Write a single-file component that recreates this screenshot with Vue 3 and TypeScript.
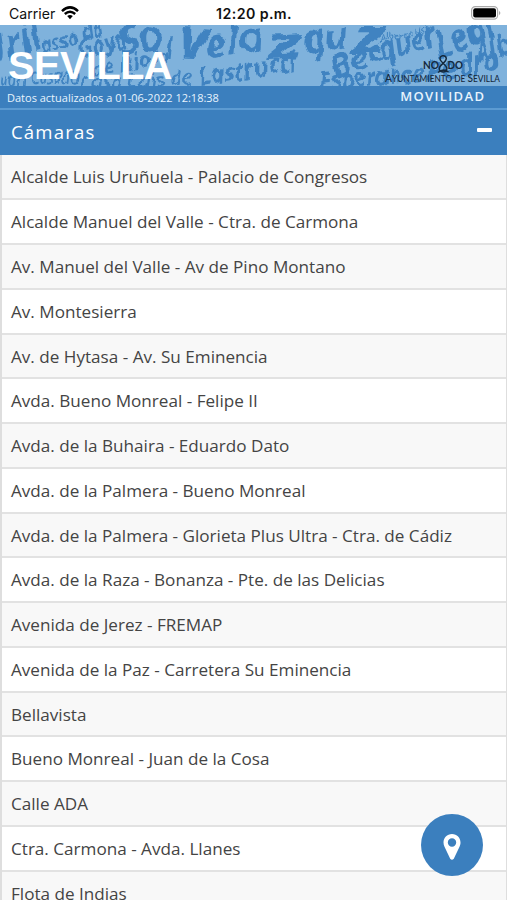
<script setup lang="ts">
interface Word {
  text: string
  x: number
  y: number
  size: number
  angle: number
  weight: number
  length: number
}

const words: Word[] = [
  { text: 'Uril', x: -14, y: 42, size: 42, angle: -18, weight: 700, length: 62 },
  { text: 'asso da', x: 44, y: 29, size: 23, angle: -16, weight: 700, length: 62 },
  { text: 'Goya', x: 80, y: 33, size: 25, angle: -12, weight: 700, length: 50 },
  { text: 'So', x: 122, y: 30, size: 40, angle: -10, weight: 700, length: 42 },
  { text: 'l', x: 167, y: 34, size: 26, angle: -8, weight: 600, length: 9 },
  { text: 'V', x: 178, y: 33, size: 44, angle: 4, weight: 800, length: 29 },
  { text: 'ela', x: 206, y: 34, size: 38, angle: -10, weight: 700, length: 60 },
  { text: 'z', x: 268, y: 35, size: 46, angle: -3, weight: 700, length: 36 },
  { text: 'qu', x: 305, y: 29, size: 38, angle: -8, weight: 700, length: 44 },
  { text: 'z', x: 352, y: 27, size: 46, angle: 0, weight: 700, length: 34 },
  { text: 'de Rioja', x: 92, y: 52, size: 22, angle: -10, weight: 700, length: 80 },
  { text: 'Juan Casado', x: -4, y: 63, size: 20, angle: -4, weight: 600, length: 84 },
  { text: 'Casa Luis de', x: 80, y: 66, size: 21, angle: -3, weight: 600, length: 112 },
  { text: 'Lastrucci', x: 200, y: 61, size: 26, angle: -9, weight: 700, length: 98 },
  { text: 'Alberto Lista', x: 381, y: 17, size: 10, angle: -10, weight: 600, length: 54 },
  { text: 'Bec', x: 336, y: 55, size: 33, angle: -22, weight: 700, length: 54 },
  { text: 'quer', x: 383, y: 37, size: 33, angle: -17, weight: 700, length: 58 },
  { text: 'Leal', x: 440, y: 34, size: 37, angle: -22, weight: 700, length: 62 },
  { text: 'Alb', x: 479, y: 38, size: 30, angle: -16, weight: 700, length: 34 },
  { text: 'Esperance', x: 319, y: 66, size: 26, angle: -5, weight: 700, length: 106 },
  { text: 'Pedro', x: 428, y: 58, size: 31, angle: -10, weight: 700, length: 74 },
]

const cameras: string[] = [
  'Alcalde Luis Uruñuela - Palacio de Congresos',
  'Alcalde Manuel del Valle - Ctra. de Carmona',
  'Av. Manuel del Valle - Av de Pino Montano',
  'Av. Montesierra',
  'Av. de Hytasa - Av. Su Eminencia',
  'Avda. Bueno Monreal - Felipe II',
  'Avda. de la Buhaira - Eduardo Dato',
  'Avda. de la Palmera - Bueno Monreal',
  'Avda. de la Palmera - Glorieta Plus Ultra - Ctra. de Cádiz',
  'Avda. de la Raza - Bonanza - Pte. de las Delicias',
  'Avenida de Jerez - FREMAP',
  'Avenida de la Paz - Carretera Su Eminencia',
  'Bellavista',
  'Bueno Monreal - Juan de la Cosa',
  'Calle ADA',
  'Ctra. Carmona - Avda. Llanes',
  'Flota de Indias',
]
</script>

<template>
  <div class="screen">
    <div class="status">
      <div class="carrier">
        <span>Carrier</span>
        <svg class="wifi" width="18" height="14" viewBox="0 0 18 14">
          <path d="M1 5.1 Q9 -2.3 17 5.1" fill="none" stroke="#000" stroke-width="2.5" />
          <path d="M3.8 8 Q9 3.3 14.2 8" fill="none" stroke="#000" stroke-width="2.4" />
          <path d="M6.2 10.1 Q9 7.8 11.8 10.1 L9 13.3Z" />
        </svg>
      </div>
      <span class="clock">12:20 p.m.</span>
      <svg class="battery" width="30" height="14" viewBox="0 0 30 14">
        <rect x=".6" y=".6" width="26" height="12.6" rx="3.6" fill="#fff" stroke="#aaa" stroke-width="1.2" />
        <rect x="2.2" y="2.2" width="22.8" height="9.4" rx="2" />
        <path d="M28 4.7 Q30.8 7 28 9.2Z" fill="#aaa" />
      </svg>
    </div>

    <header class="banner">
      <svg class="scribble" width="507" height="61" viewBox="0 0 507 61" aria-hidden="true">
        <defs>
          <filter id="brush" x="-5%" y="-20%" width="110%" height="140%">
            <feTurbulence type="fractalNoise" baseFrequency="0.06" numOctaves="2" seed="7" />
            <feDisplacementMap in="SourceGraphic" scale="9" xChannelSelector="R" yChannelSelector="G" />
          </filter>
        </defs>
        <g filter="url(#brush)">
          <text
            v-for="(word, index) in words"
            :key="index"
            :x="word.x"
            :y="word.y"
            :font-size="word.size"
            :font-weight="word.weight"
            :textLength="word.length"
            lengthAdjust="spacingAndGlyphs"
            :transform="`rotate(${word.angle} ${word.x} ${word.y})`"
          >{{ word.text }}</text>
        </g>
      </svg>
      <h1 class="city">SEVILLA</h1>
      <svg class="council" width="118" height="32" viewBox="0 0 118 32">
        <text x="39" y="15" font-size="11.5" font-weight="700" textLength="16" lengthAdjust="spacingAndGlyphs">NO</text>
        <text x="63.5" y="15" font-size="11.5" font-weight="700" textLength="15.5" lengthAdjust="spacingAndGlyphs">DO</text>
        <path d="M62.3 4 C61.5 .5 55.5 1 56 5 C56.5 9 63.5 11 62.8 15 C62 19 55.3 19 55.3 14.5 C55.3 10.5 62.5 9 62.3 4 M54 18.5 Q59 14 64.5 18" />
        <text x="1" y="28" textLength="115" lengthAdjust="spacingAndGlyphs"><tspan font-size="10.5">A</tspan><tspan font-size="8.6">YUNTAMIENTO DE </tspan><tspan font-size="10.5">S</tspan><tspan font-size="8.6">EVILLA</tspan></text>
      </svg>
    </header>

    <div class="info">
      <span class="updated">Datos actualizados a 01-06-2022 12:18:38</span>
      <span class="area">MOVILIDAD</span>
    </div>

    <div class="section">
      <h2>Cámaras</h2>
      <span class="collapse"></span>
    </div>

    <ul class="list">
      <li v-for="camera in cameras" :key="camera">{{ camera }}</li>
    </ul>

    <button class="locate" aria-label="Mapa">
      <svg width="18" height="26" viewBox="0 0 18 26">
        <path fill="#fff" fill-rule="evenodd" d="M9 0 C4 0 .5 3.8 .5 8.5 C.5 10.2 .9 11.5 1.5 12.8 L7.2 24.7 Q9 27 10.8 24.7 L16.5 12.8 C17.1 11.5 17.5 10.2 17.5 8.5 C17.5 3.8 14 0 9 0Z M9 4.3 A4.2 4.2 0 1 1 9 12.7 A4.2 4.2 0 1 1 9 4.3Z" />
      </svg>
    </button>
  </div>
</template>

<style>
body {
  overflow: hidden;
}
</style>

<style scoped>
.screen {
  position: relative;
  width: 507px;
  height: 900px;
  overflow: hidden;
  background: #fff;
  font-family: "Open Sans", sans-serif;
}

.status {
  height: 25px;
  box-sizing: border-box;
  padding: 1px 6px 0 9px;
  display: grid;
  grid-template-columns: 1fr auto 1fr;
  align-items: center;
  font-family: Inter, sans-serif;
  color: #111;
}

.carrier {
  display: flex;
  align-items: center;
  gap: 6px;
  font-size: 14.1px;
}

.clock {
  font-size: 14.2px;
  font-weight: 600;
  letter-spacing: 0.4px;
  margin-right: 2px;
}

.battery {
  justify-self: end;
}

.banner {
  height: 61px;
  display: grid;
  grid-template-columns: 1fr auto;
  background: #7fb2dc;
  overflow: hidden;
}

.scribble {
  grid-area: 1 / 1 / 2 / 3;
  font-family: "Open Sans", sans-serif;
  font-style: italic;
  fill: #3f83c1;
}

.city {
  grid-area: 1 / 1;
  align-self: end;
  margin: 0 0 1px 8px;
  font: 700 39.5px/40px "Liberation Sans", sans-serif;
  letter-spacing: -0.4px;
  color: #fff;
  z-index: 1;
}

.council {
  grid-area: 1 / 2;
  align-self: end;
  margin: 0 5px 0 0;
  font-family: Lato, sans-serif;
  font-weight: 500;
  fill: #15293d;
  z-index: 1;
}

.council path {
  fill: none;
  stroke: #15293d;
  stroke-width: 1.5;
}

.info {
  height: 22px;
  display: flex;
  justify-content: space-between;
  align-items: center;
  padding: 0 23px 0 7px;
  background: #3b7fbe;
  color: #e7f3fd;
  border-bottom: 2px solid #5c9bd2;
}

.updated {
  font-size: 11px;
}

.area {
  font-size: 13px;
  font-weight: 600;
  letter-spacing: 1.35px;
  margin: -2px -1.3px 0 0;
}

.section {
  box-sizing: border-box;
  height: 45px;
  display: flex;
  justify-content: space-between;
  align-items: center;
  padding: 0 15px 2px 11px;
  background: #3b7fbe;
  color: #fff;
}

.section h2 {
  margin: 0;
  font-size: 18.6px;
  font-weight: 400;
  letter-spacing: 1.15px;
}

.collapse {
  width: 15px;
  height: 4px;
  margin-bottom: 4px;
  border-radius: 1px;
  background: #fff;
}

.list {
  margin: 0;
  padding: 0;
  list-style: none;
  border: solid #dedede;
  border-width: 0 1px 0 2px;
}

.list li {
  box-sizing: border-box;
  height: 44.77px;
  padding-left: 9px;
  border-bottom: 2px solid #e2e2e2;
  font-size: 17.13px;
  line-height: 44.4px;
  color: #444;
  white-space: nowrap;
}

.list li:first-child {
  height: 45.3px;
}

.list li:nth-child(odd) {
  background: #f8f8f8;
}

.locate {
  position: absolute;
  left: 421px;
  top: 814px;
  width: 62px;
  height: 62px;
  padding: 3px 0 0;
  border: 0;
  border-radius: 50%;
  background: #3b7fbe;
  display: flex;
  align-items: center;
  justify-content: center;
}
</style>
